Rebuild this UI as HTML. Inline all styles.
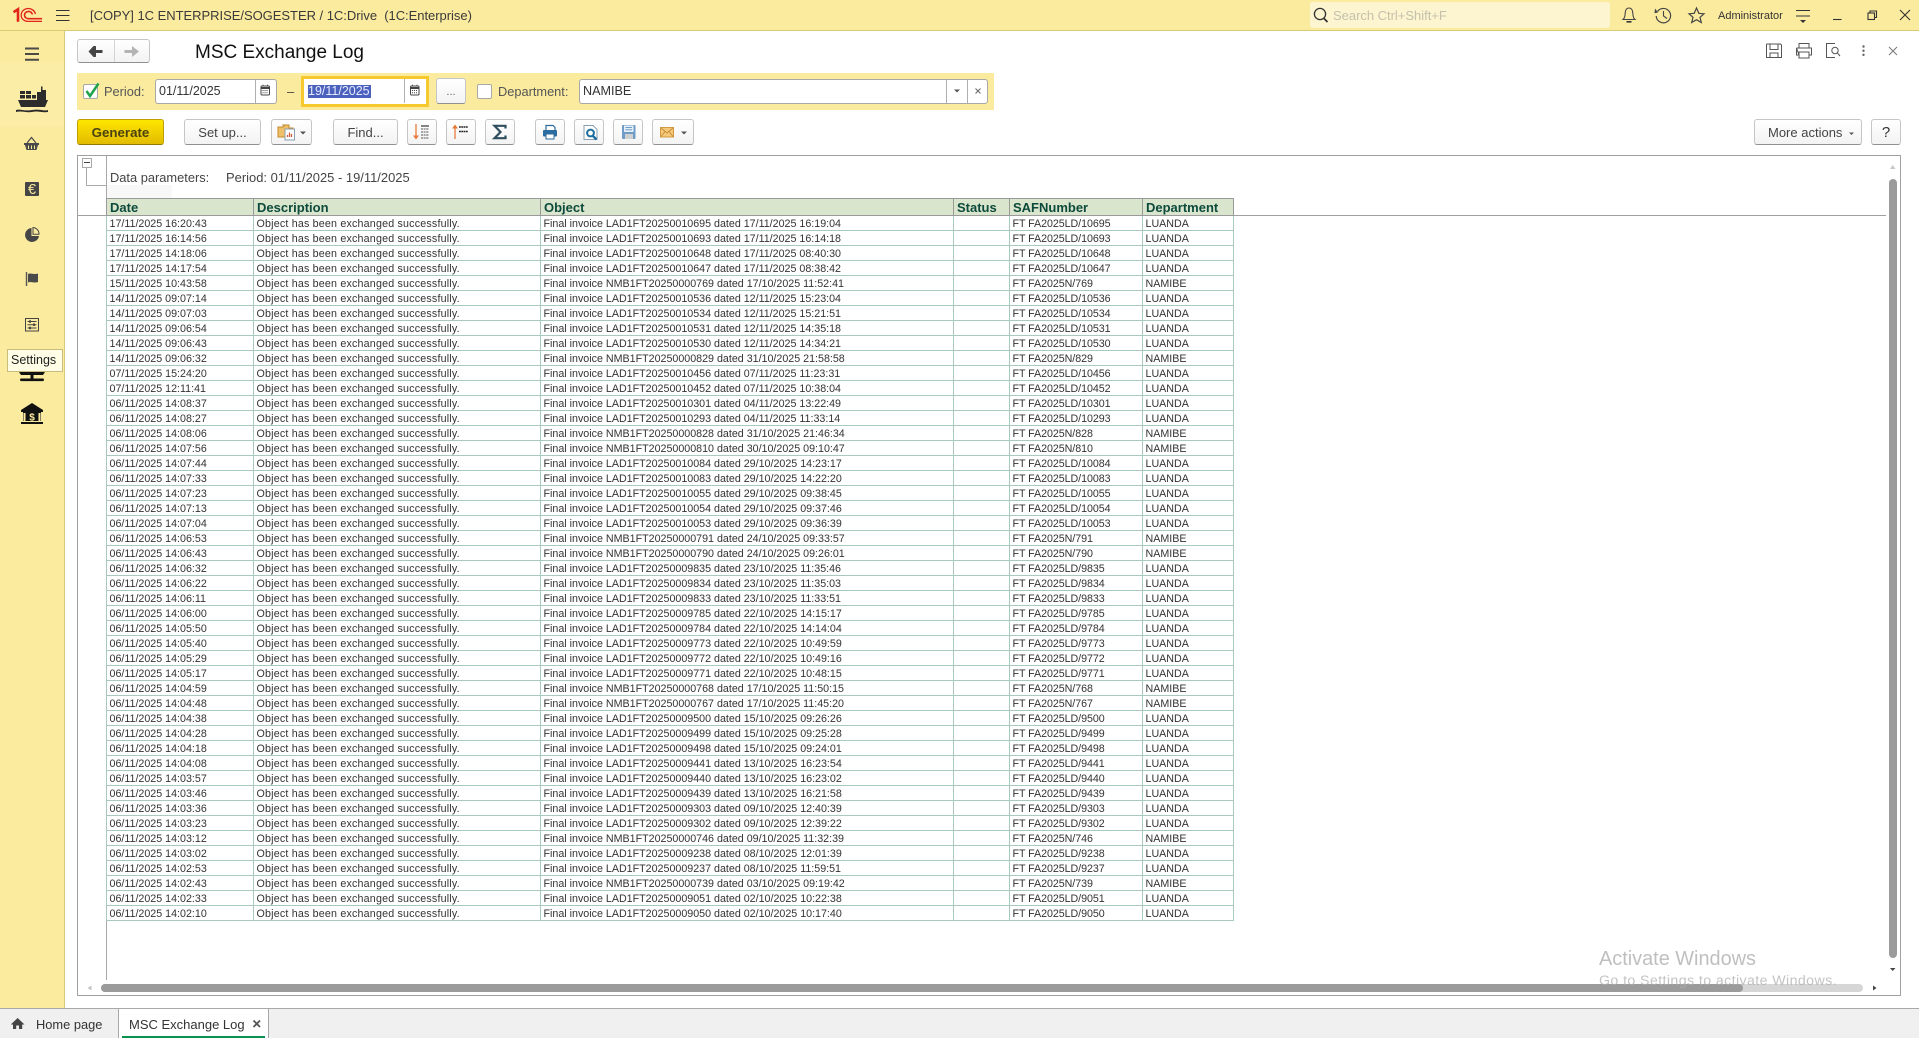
<!DOCTYPE html>
<html><head><meta charset="utf-8"><title>MSC Exchange Log</title>
<style>
*{box-sizing:border-box}
html,body{margin:0;padding:0;width:1919px;height:1038px;overflow:hidden;background:#fff;font-family:"Liberation Sans",Arial,sans-serif;color:#333}
.a{position:absolute}
.t{position:absolute;white-space:nowrap}
.b{position:absolute;top:119px;height:26px;background:linear-gradient(#fff,#f3f3f3);border:1px solid #c6c6c6;border-bottom:1.5px solid #909090;border-radius:3px;font-size:13px;line-height:25px;text-align:center;color:#444}
.i{position:absolute;top:79px;height:25px;background:#fff;border:1px solid #a8a8a8;border-radius:3px}
table{position:absolute;left:106px;top:198px;border-collapse:separate;border-spacing:0;table-layout:fixed;width:1128px;font-size:10.7px;color:#333}
th{height:18px;background:#d9e5cd;border-top:1px solid #9a9a9a;border-bottom:1px solid #9a9a9a;border-right:1px solid #9a9a9a;font-size:13px;line-height:15px;font-weight:bold;color:#0c4a3c;text-align:left;padding:1px 0 0 3px;white-space:nowrap;overflow:hidden}
th:first-child{border-left:1px solid #9a9a9a}
td{height:15px;line-height:12px;padding:2px 0 0 2.5px;border-right:1px solid #a9c8be;border-bottom:1px solid #a9c8be;white-space:nowrap;overflow:hidden}
td:first-child{border-left:1px solid #a9c8be}
td:nth-child(2){letter-spacing:.19px}
td:nth-child(5){letter-spacing:-.06px}
</style></head><body>

<div class="a" style="left:0;top:0;width:1919px;height:31px;background:#fbeb9f;border-bottom:1px solid #d8ca70"></div>
<div class="a" style="left:0;top:31px;width:65px;height:977px;background:#fbeb9f;border-right:1px solid #d8ca78"></div>
<div class="a" style="left:0;top:63px;width:64px;height:64px;background:#fbeca6"></div>

<div class="t" style="left:90px;top:8px;font-size:13px;line-height:16px;color:#3a3a3a;white-space:pre;letter-spacing:-.03px">[COPY] 1C ENTERPRISE/SOGESTER / 1C:Drive  (1C:Enterprise)</div>
<div class="a" style="left:1310px;top:2px;width:300px;height:26px;background:#fdf5d0;border-radius:3px"></div>
<div class="t" style="left:1333px;top:7.5px;font-size:13px;line-height:16px;color:#c4c0ac;letter-spacing:-.02px">Search Ctrl+Shift+F</div>
<div class="t" style="left:1718px;top:9px;font-size:11px;line-height:14px;color:#333">Administrator</div>

<div class="a" style="left:77px;top:39px;width:73px;height:24px;background:linear-gradient(#fff,#f3f3f3);border:1px solid #c6c6c6;border-bottom:1.5px solid #909090;border-radius:3px"></div>
<div class="a" style="left:114px;top:40px;width:1px;height:22px;background:#d4d4d4"></div>
<div class="t" style="left:195px;top:41px;font-size:19px;line-height:23px;color:#111">MSC Exchange Log</div>

<div class="a" style="left:77px;top:73px;width:917px;height:37px;background:#fbeb9f"></div>
<div class="a" style="left:83px;top:84px;width:15px;height:15px;background:#fff;border:1px solid #a8a8a8;border-radius:2px"></div>
<div class="t" style="left:104px;top:84px;font-size:12.8px;line-height:15px;color:#555">Period:</div>
<div class="i" style="left:155px;width:122px"></div>
<div class="a" style="left:255px;top:80px;width:1px;height:23px;background:#b0b0b0"></div>
<div class="t" style="left:159px;top:84px;font-size:12.5px;line-height:15px;color:#333">01/11/2025</div>
<div class="t" style="left:287px;top:84px;font-size:13px;line-height:15px;color:#444">–</div>
<div class="a" style="left:301px;top:76px;width:128px;height:31px;background:#fff;border:3px solid #f6c92e"></div>
<div class="a" style="left:404px;top:79px;width:1px;height:24px;background:#b0b0b0"></div>
<div class="a" style="left:308px;top:85px;width:63px;height:13px;background:#4a62bd"></div>
<div class="t" style="left:308px;top:84px;font-size:12.5px;line-height:15px;color:#e8ebff">19/11/2025</div>
<div class="b" style="left:436px;top:78px;width:30px;font-size:11px;line-height:26px;color:#666">...</div>
<div class="a" style="left:477px;top:84px;width:15px;height:15px;background:#fff;border:1px solid #a8a8a8;border-radius:2px"></div>
<div class="t" style="left:498px;top:84px;font-size:12.8px;line-height:15px;color:#555">Department:</div>
<div class="i" style="left:579px;width:409px"></div>
<div class="a" style="left:946px;top:80px;width:1px;height:23px;background:#b0b0b0"></div>
<div class="a" style="left:967px;top:80px;width:1px;height:23px;background:#b0b0b0"></div>
<div class="t" style="left:583px;top:84px;font-size:12.6px;line-height:15px;color:#333">NAMIBE</div>

<div class="b" style="left:77px;width:87px;background:linear-gradient(#ffe600,#e2bb00);border:1px solid #bfa000;border-bottom:1.5px solid #8e7800;font-weight:bold;font-size:13.3px;color:#4a4210">Generate</div>
<div class="b" style="left:184px;width:77px">Set up...</div>
<div class="b" style="left:271px;width:41px"></div>
<div class="b" style="left:333px;width:65px">Find...</div>
<div class="b" style="left:407px;width:30px"></div>
<div class="b" style="left:446px;width:30px"></div>
<div class="b" style="left:485px;width:30px"></div>
<div class="b" style="left:535px;width:30px"></div>
<div class="b" style="left:574px;width:30px"></div>
<div class="b" style="left:613px;width:30px"></div>
<div class="b" style="left:652px;width:42px"></div>
<div class="b" style="left:1754px;width:108px;text-align:left;padding-left:13px">More actions</div>
<div class="b" style="left:1871px;width:30px;font-size:15px;color:#333">?</div>

<div class="a" style="left:77px;top:155px;width:1824px;height:841px;border:1px solid #a0a0a0;background:#fff"></div>
<div class="a" style="left:106px;top:185px;width:66px;height:13px;background:#f8f8f8"></div>
<div class="a" style="left:106px;top:156px;width:1px;height:824px;background:#a8a8a8"></div>
<div class="a" style="left:86px;top:167px;width:1px;height:18px;background:#a8a8a8"></div>
<div class="a" style="left:86px;top:185px;width:20px;height:1px;background:#a8a8a8"></div>
<div class="a" style="left:82px;top:158px;width:10px;height:10px;background:#fff;border:1px solid #a8a8a8"></div>
<div class="a" style="left:84px;top:162px;width:6px;height:1px;background:#444"></div>
<div class="a" style="left:78px;top:215px;width:1808px;height:1px;background:#a0a0a0"></div>
<div class="t" style="left:110px;top:170px;font-size:12.85px;line-height:16px;color:#444">Data parameters:</div>
<div class="t" style="left:226px;top:170px;font-size:12.95px;line-height:16px;color:#444">Period: 01/11/2025 - 19/11/2025</div>

<table>
<colgroup><col style="width:148px"><col style="width:287px"><col style="width:413px"><col style="width:56px"><col style="width:133px"><col style="width:91px"></colgroup>
<tr><th>Date</th><th>Description</th><th>Object</th><th>Status</th><th>SAFNumber</th><th>Department</th></tr>
<tr><td>17/11/2025 16:20:43</td><td>Object has been exchanged successfully.</td><td>Final invoice LAD1FT20250010695 dated 17/11/2025 16:19:04</td><td></td><td>FT FA2025LD/10695</td><td>LUANDA</td></tr>
<tr><td>17/11/2025 16:14:56</td><td>Object has been exchanged successfully.</td><td>Final invoice LAD1FT20250010693 dated 17/11/2025 16:14:18</td><td></td><td>FT FA2025LD/10693</td><td>LUANDA</td></tr>
<tr><td>17/11/2025 14:18:06</td><td>Object has been exchanged successfully.</td><td>Final invoice LAD1FT20250010648 dated 17/11/2025 08:40:30</td><td></td><td>FT FA2025LD/10648</td><td>LUANDA</td></tr>
<tr><td>17/11/2025 14:17:54</td><td>Object has been exchanged successfully.</td><td>Final invoice LAD1FT20250010647 dated 17/11/2025 08:38:42</td><td></td><td>FT FA2025LD/10647</td><td>LUANDA</td></tr>
<tr><td>15/11/2025 10:43:58</td><td>Object has been exchanged successfully.</td><td>Final invoice NMB1FT20250000769 dated 17/10/2025 11:52:41</td><td></td><td>FT FA2025N/769</td><td>NAMIBE</td></tr>
<tr><td>14/11/2025 09:07:14</td><td>Object has been exchanged successfully.</td><td>Final invoice LAD1FT20250010536 dated 12/11/2025 15:23:04</td><td></td><td>FT FA2025LD/10536</td><td>LUANDA</td></tr>
<tr><td>14/11/2025 09:07:03</td><td>Object has been exchanged successfully.</td><td>Final invoice LAD1FT20250010534 dated 12/11/2025 15:21:51</td><td></td><td>FT FA2025LD/10534</td><td>LUANDA</td></tr>
<tr><td>14/11/2025 09:06:54</td><td>Object has been exchanged successfully.</td><td>Final invoice LAD1FT20250010531 dated 12/11/2025 14:35:18</td><td></td><td>FT FA2025LD/10531</td><td>LUANDA</td></tr>
<tr><td>14/11/2025 09:06:43</td><td>Object has been exchanged successfully.</td><td>Final invoice LAD1FT20250010530 dated 12/11/2025 14:34:21</td><td></td><td>FT FA2025LD/10530</td><td>LUANDA</td></tr>
<tr><td>14/11/2025 09:06:32</td><td>Object has been exchanged successfully.</td><td>Final invoice NMB1FT20250000829 dated 31/10/2025 21:58:58</td><td></td><td>FT FA2025N/829</td><td>NAMIBE</td></tr>
<tr><td>07/11/2025 15:24:20</td><td>Object has been exchanged successfully.</td><td>Final invoice LAD1FT20250010456 dated 07/11/2025 11:23:31</td><td></td><td>FT FA2025LD/10456</td><td>LUANDA</td></tr>
<tr><td>07/11/2025 12:11:41</td><td>Object has been exchanged successfully.</td><td>Final invoice LAD1FT20250010452 dated 07/11/2025 10:38:04</td><td></td><td>FT FA2025LD/10452</td><td>LUANDA</td></tr>
<tr><td>06/11/2025 14:08:37</td><td>Object has been exchanged successfully.</td><td>Final invoice LAD1FT20250010301 dated 04/11/2025 13:22:49</td><td></td><td>FT FA2025LD/10301</td><td>LUANDA</td></tr>
<tr><td>06/11/2025 14:08:27</td><td>Object has been exchanged successfully.</td><td>Final invoice LAD1FT20250010293 dated 04/11/2025 11:33:14</td><td></td><td>FT FA2025LD/10293</td><td>LUANDA</td></tr>
<tr><td>06/11/2025 14:08:06</td><td>Object has been exchanged successfully.</td><td>Final invoice NMB1FT20250000828 dated 31/10/2025 21:46:34</td><td></td><td>FT FA2025N/828</td><td>NAMIBE</td></tr>
<tr><td>06/11/2025 14:07:56</td><td>Object has been exchanged successfully.</td><td>Final invoice NMB1FT20250000810 dated 30/10/2025 09:10:47</td><td></td><td>FT FA2025N/810</td><td>NAMIBE</td></tr>
<tr><td>06/11/2025 14:07:44</td><td>Object has been exchanged successfully.</td><td>Final invoice LAD1FT20250010084 dated 29/10/2025 14:23:17</td><td></td><td>FT FA2025LD/10084</td><td>LUANDA</td></tr>
<tr><td>06/11/2025 14:07:33</td><td>Object has been exchanged successfully.</td><td>Final invoice LAD1FT20250010083 dated 29/10/2025 14:22:20</td><td></td><td>FT FA2025LD/10083</td><td>LUANDA</td></tr>
<tr><td>06/11/2025 14:07:23</td><td>Object has been exchanged successfully.</td><td>Final invoice LAD1FT20250010055 dated 29/10/2025 09:38:45</td><td></td><td>FT FA2025LD/10055</td><td>LUANDA</td></tr>
<tr><td>06/11/2025 14:07:13</td><td>Object has been exchanged successfully.</td><td>Final invoice LAD1FT20250010054 dated 29/10/2025 09:37:46</td><td></td><td>FT FA2025LD/10054</td><td>LUANDA</td></tr>
<tr><td>06/11/2025 14:07:04</td><td>Object has been exchanged successfully.</td><td>Final invoice LAD1FT20250010053 dated 29/10/2025 09:36:39</td><td></td><td>FT FA2025LD/10053</td><td>LUANDA</td></tr>
<tr><td>06/11/2025 14:06:53</td><td>Object has been exchanged successfully.</td><td>Final invoice NMB1FT20250000791 dated 24/10/2025 09:33:57</td><td></td><td>FT FA2025N/791</td><td>NAMIBE</td></tr>
<tr><td>06/11/2025 14:06:43</td><td>Object has been exchanged successfully.</td><td>Final invoice NMB1FT20250000790 dated 24/10/2025 09:26:01</td><td></td><td>FT FA2025N/790</td><td>NAMIBE</td></tr>
<tr><td>06/11/2025 14:06:32</td><td>Object has been exchanged successfully.</td><td>Final invoice LAD1FT20250009835 dated 23/10/2025 11:35:46</td><td></td><td>FT FA2025LD/9835</td><td>LUANDA</td></tr>
<tr><td>06/11/2025 14:06:22</td><td>Object has been exchanged successfully.</td><td>Final invoice LAD1FT20250009834 dated 23/10/2025 11:35:03</td><td></td><td>FT FA2025LD/9834</td><td>LUANDA</td></tr>
<tr><td>06/11/2025 14:06:11</td><td>Object has been exchanged successfully.</td><td>Final invoice LAD1FT20250009833 dated 23/10/2025 11:33:51</td><td></td><td>FT FA2025LD/9833</td><td>LUANDA</td></tr>
<tr><td>06/11/2025 14:06:00</td><td>Object has been exchanged successfully.</td><td>Final invoice LAD1FT20250009785 dated 22/10/2025 14:15:17</td><td></td><td>FT FA2025LD/9785</td><td>LUANDA</td></tr>
<tr><td>06/11/2025 14:05:50</td><td>Object has been exchanged successfully.</td><td>Final invoice LAD1FT20250009784 dated 22/10/2025 14:14:04</td><td></td><td>FT FA2025LD/9784</td><td>LUANDA</td></tr>
<tr><td>06/11/2025 14:05:40</td><td>Object has been exchanged successfully.</td><td>Final invoice LAD1FT20250009773 dated 22/10/2025 10:49:59</td><td></td><td>FT FA2025LD/9773</td><td>LUANDA</td></tr>
<tr><td>06/11/2025 14:05:29</td><td>Object has been exchanged successfully.</td><td>Final invoice LAD1FT20250009772 dated 22/10/2025 10:49:16</td><td></td><td>FT FA2025LD/9772</td><td>LUANDA</td></tr>
<tr><td>06/11/2025 14:05:17</td><td>Object has been exchanged successfully.</td><td>Final invoice LAD1FT20250009771 dated 22/10/2025 10:48:15</td><td></td><td>FT FA2025LD/9771</td><td>LUANDA</td></tr>
<tr><td>06/11/2025 14:04:59</td><td>Object has been exchanged successfully.</td><td>Final invoice NMB1FT20250000768 dated 17/10/2025 11:50:15</td><td></td><td>FT FA2025N/768</td><td>NAMIBE</td></tr>
<tr><td>06/11/2025 14:04:48</td><td>Object has been exchanged successfully.</td><td>Final invoice NMB1FT20250000767 dated 17/10/2025 11:45:20</td><td></td><td>FT FA2025N/767</td><td>NAMIBE</td></tr>
<tr><td>06/11/2025 14:04:38</td><td>Object has been exchanged successfully.</td><td>Final invoice LAD1FT20250009500 dated 15/10/2025 09:26:26</td><td></td><td>FT FA2025LD/9500</td><td>LUANDA</td></tr>
<tr><td>06/11/2025 14:04:28</td><td>Object has been exchanged successfully.</td><td>Final invoice LAD1FT20250009499 dated 15/10/2025 09:25:28</td><td></td><td>FT FA2025LD/9499</td><td>LUANDA</td></tr>
<tr><td>06/11/2025 14:04:18</td><td>Object has been exchanged successfully.</td><td>Final invoice LAD1FT20250009498 dated 15/10/2025 09:24:01</td><td></td><td>FT FA2025LD/9498</td><td>LUANDA</td></tr>
<tr><td>06/11/2025 14:04:08</td><td>Object has been exchanged successfully.</td><td>Final invoice LAD1FT20250009441 dated 13/10/2025 16:23:54</td><td></td><td>FT FA2025LD/9441</td><td>LUANDA</td></tr>
<tr><td>06/11/2025 14:03:57</td><td>Object has been exchanged successfully.</td><td>Final invoice LAD1FT20250009440 dated 13/10/2025 16:23:02</td><td></td><td>FT FA2025LD/9440</td><td>LUANDA</td></tr>
<tr><td>06/11/2025 14:03:46</td><td>Object has been exchanged successfully.</td><td>Final invoice LAD1FT20250009439 dated 13/10/2025 16:21:58</td><td></td><td>FT FA2025LD/9439</td><td>LUANDA</td></tr>
<tr><td>06/11/2025 14:03:36</td><td>Object has been exchanged successfully.</td><td>Final invoice LAD1FT20250009303 dated 09/10/2025 12:40:39</td><td></td><td>FT FA2025LD/9303</td><td>LUANDA</td></tr>
<tr><td>06/11/2025 14:03:23</td><td>Object has been exchanged successfully.</td><td>Final invoice LAD1FT20250009302 dated 09/10/2025 12:39:22</td><td></td><td>FT FA2025LD/9302</td><td>LUANDA</td></tr>
<tr><td>06/11/2025 14:03:12</td><td>Object has been exchanged successfully.</td><td>Final invoice NMB1FT20250000746 dated 09/10/2025 11:32:39</td><td></td><td>FT FA2025N/746</td><td>NAMIBE</td></tr>
<tr><td>06/11/2025 14:03:02</td><td>Object has been exchanged successfully.</td><td>Final invoice LAD1FT20250009238 dated 08/10/2025 12:01:39</td><td></td><td>FT FA2025LD/9238</td><td>LUANDA</td></tr>
<tr><td>06/11/2025 14:02:53</td><td>Object has been exchanged successfully.</td><td>Final invoice LAD1FT20250009237 dated 08/10/2025 11:59:51</td><td></td><td>FT FA2025LD/9237</td><td>LUANDA</td></tr>
<tr><td>06/11/2025 14:02:43</td><td>Object has been exchanged successfully.</td><td>Final invoice NMB1FT20250000739 dated 03/10/2025 09:19:42</td><td></td><td>FT FA2025N/739</td><td>NAMIBE</td></tr>
<tr><td>06/11/2025 14:02:33</td><td>Object has been exchanged successfully.</td><td>Final invoice LAD1FT20250009051 dated 02/10/2025 10:22:38</td><td></td><td>FT FA2025LD/9051</td><td>LUANDA</td></tr>
<tr><td>06/11/2025 14:02:10</td><td>Object has been exchanged successfully.</td><td>Final invoice LAD1FT20250009050 dated 02/10/2025 10:17:40</td><td></td><td>FT FA2025LD/9050</td><td>LUANDA</td></tr>
</table>

<div class="a" style="left:1889px;top:179px;width:8px;height:779px;background:#9b9b9b;border-radius:4px"></div>
<div class="a" style="left:101px;top:984px;width:1762px;height:8px;background:#d6d6d6;border-radius:4px"></div>
<div class="a" style="left:101px;top:984px;width:1642px;height:8px;background:#9b9b9b;border-radius:4px"></div>

<div class="a" style="left:0;top:1008px;width:1919px;height:30px;background:#f0f0f0;border-top:1px solid #a8a8a8"></div>
<div class="a" style="left:118px;top:1008px;width:151px;height:30px;background:#fff;border:1px solid #a8a8a8;border-bottom:0"></div>
<div class="a" style="left:122px;top:1036px;width:143px;height:2px;background:#0a9150"></div>
<div class="t" style="left:36px;top:1017px;font-size:12.85px;line-height:16px;color:#333">Home page</div>
<div class="t" style="left:129px;top:1017px;font-size:13px;line-height:16px;color:#333">MSC Exchange Log</div>

<svg class="a" style="left:0;top:0" width="1919" height="1038" viewBox="0 0 1919 1038" fill="none">
<!-- 1C logo -->
<g stroke="#e1251b" fill="none">
<path d="M13.5 12.2L18 9.3V21.8" stroke-width="2.6"/>
<path d="M35.5 14C34.5 10.5 31.5 8.5 28.5 8.5C24.3 8.5 21.2 11.3 21.2 15.2C21.2 19 24.3 21.4 28.5 21.4H42" stroke-width="1.3"/>
<path d="M32.5 14.5C31.8 12.5 30.3 11.4 28.6 11.4C26.3 11.4 24.5 13 24.5 15.1C24.5 17.2 26.3 18.7 28.6 18.7H42" stroke-width="1.6"/>
</g>
<!-- top hamburger -->
<path d="M56 10.5H69.5M56 15.5H69.5M56 20.5H69.5" stroke="#333" stroke-width="1"/>
<!-- search -->
<circle cx="1320" cy="14" r="5.6" stroke="#333" stroke-width="1.3"/><path d="M1324 18.5L1327.5 22" stroke="#333" stroke-width="1.8"/>
<!-- bell -->
<path d="M1623 19.5C1625.5 17.5 1625 14 1625.3 12C1625.8 9 1627.5 8 1629 8C1630.5 8 1632.2 9 1632.7 12C1633 14 1632.5 17.5 1635 19.5Z" stroke="#444" stroke-width="1.1"/><path d="M1626.5 21.8H1631.5" stroke="#333" stroke-width="1.6"/>
<!-- history -->
<path d="M1657.5 11.5A7.2 7.2 0 1 1 1656.2 16" stroke="#444" stroke-width="1.2"/><path d="M1655 8.5L1658 12.5L1654.5 13.2Z" fill="#444"/><path d="M1663.5 11V16L1667 18.5" stroke="#444" stroke-width="1.1"/>
<!-- star -->
<path d="M1696.5 8L1698.8 13.3L1704 13.8L1700 17.3L1701.3 22.5L1696.5 19.7L1691.7 22.5L1693 17.3L1689 13.8L1694.2 13.3Z" stroke="#444" stroke-width="1.2"/>
<!-- lines menu -->
<path d="M1796 10.5H1810M1796 16H1810" stroke="#333" stroke-width="1"/><path d="M1800 20H1806L1803 23Z" fill="#333"/>
<!-- window controls -->
<path d="M1833 19.5H1841.5" stroke="#333" stroke-width="1.1"/>
<rect x="1868" y="13" width="6.5" height="6.5" stroke="#333" stroke-width="1.1"/><path d="M1870 13V11H1876.5V17.5H1874.5" stroke="#333" stroke-width="1.1"/>
<path d="M1900 10L1910 20M1910 10L1900 20" stroke="#333" stroke-width="1.1"/>
<!-- sidebar hamburger -->
<path d="M25 48.5H39M25 54H39M25 59.8H39" stroke="#4a4a4a" stroke-width="2"/>
<!-- ship -->
<g fill="#2c2c2c">
<rect x="20" y="91" width="5" height="3"/><rect x="26" y="91" width="5" height="3"/>
<rect x="20" y="95" width="5" height="3.5"/><rect x="26" y="95" width="5" height="3.5"/><rect x="32" y="95" width="4" height="3.5"/>
<path d="M37 92H41V86.5H42.5V90H46V100H37Z"/>
<path d="M18 100H48L45 107H21Z"/>
<path d="M16 110C20 108.5 24 111.5 32 110C40 108.5 44 111.5 48 110V112C42 113 38 110.5 32 112C26 113 22 110.5 16 112Z"/>
</g>
<!-- basket -->
<g fill="#4a4a4a"><path d="M24 143H39V145H38L36.5 150H26.5L25 145H24Z"/></g>
<path d="M27 143L31.5 137.5L36 143" stroke="#4a4a4a" stroke-width="1.2"/>
<path d="M28.5 145.5V149M31.5 145.5V149M34.5 145.5V149" stroke="#fbeb9f" stroke-width="1"/>
<!-- euro -->
<rect x="25" y="182" width="14" height="14" rx="1" fill="#454545"/>
<text x="32" y="194" text-anchor="middle" font-family="Liberation Sans,sans-serif" font-size="14.5" fill="#fbeb9f">€</text>
<!-- chart -->
<path d="M31.5 228A7 7 0 1 0 39 236H31.5Z" fill="#454545"/>
<path d="M33 227.5A6.5 6.5 0 0 1 39 234.2H33Z" fill="#fbeb9f" stroke="#454545" stroke-width="1"/>
<!-- flag -->
<path d="M26.5 272V286" stroke="#555" stroke-width="1.4"/><path d="M28 274C31 272.5 33 275 38 273.5V282C33 283.5 31 281 28 282.5Z" fill="#4a4a4a"/>
<!-- settings -->
<rect x="25.5" y="318.5" width="13" height="12.5" stroke="#444" stroke-width="1"/>
<path d="M27.5 321.5H36.5M27.5 324.7H36.5M27.5 328H36.5" stroke="#444" stroke-width="1"/>
<rect x="29" y="320.3" width="2" height="2.4" fill="#444"/><rect x="33" y="323.5" width="2" height="2.4" fill="#444"/><rect x="29" y="326.8" width="2" height="2.4" fill="#444"/>
<!-- computer -->
<path d="M19 372H45L43 375H21Z" fill="#111"/><rect x="30.5" y="375" width="3" height="3.5" fill="#111"/><rect x="20" y="378.5" width="24" height="2.6" rx="1.2" fill="#111"/>
<!-- bank -->
<g fill="#111"><path d="M32 403L43 410V412H21V410Z"/><rect x="23" y="412" width="18" height="9"/><rect x="21" y="422" width="22" height="2"/></g>
<path d="M23.5 413H25.5V421H23.5ZM38.5 413H40.5V421H38.5Z" fill="#fbeb9f"/>
<text x="32" y="420.5" text-anchor="middle" font-family="Liberation Sans,sans-serif" font-size="10" font-weight="bold" fill="#fbeb9f">$</text>
<!-- nav arrows -->
<path d="M92 51.5H102.5" stroke="#444" stroke-width="3"/><path d="M96 46L90 51.5L96 57H93.5L88.5 51.5L93.5 46Z" fill="#444"/><path d="M96 46L89.5 51.5L96 57Z" fill="#444"/>
<path d="M124.5 51.5H136" stroke="#b4b4b4" stroke-width="3"/><path d="M132 46L139 51.5L132 57Z" fill="#b4b4b4"/>
<!-- form icons -->
<g stroke="#555" stroke-width="1">
<path d="M1767 44H1780.5L1781.5 45V57.5H1766.5V44.5Z"/><path d="M1770 44V49.5H1778V44M1770 57.5V53H1778V57.5"/>
<path d="M1799 48V43.5H1809V48M1796.5 48H1811.5V55H1809M1799 55H1796.5V48Z"/><rect x="1799" y="52" width="10" height="6"/>
<path d="M1835 43.5H1826.5V57.5H1835"/><circle cx="1835" cy="50.5" r="3.2"/><path d="M1837.5 53L1840 56"/>
<path d="M1889 47L1897 55M1897 47L1889 55" stroke="#777"/>
</g>
<path d="M1863.5 46.5V46.6M1863.5 50.7V50.8M1863.5 54.8V54.9" stroke="#666" stroke-width="2.4" stroke-linecap="round"/>
<!-- period check -->
<path d="M86.5 91L90 96L98.5 83.5" stroke="#1ea34c" stroke-width="2.5"/>
<!-- calendars -->
<g><rect x="261" y="86" width="8.5" height="9" rx="1" stroke="#444" stroke-width="1"/><path d="M261 88H269.5" stroke="#444" stroke-width="2"/><path d="M263 84.8V86.5M267.5 84.8V86.5" stroke="#444"/><path d="M262.5 90.5H268M262.5 92.8H268" stroke="#444" stroke-dasharray="1 1"/></g>
<g transform="translate(149.5 0)"><rect x="261" y="86" width="8.5" height="9" rx="1" stroke="#444" stroke-width="1"/><path d="M261 88H269.5" stroke="#444" stroke-width="2"/><path d="M263 84.8V86.5M267.5 84.8V86.5" stroke="#444"/><path d="M262.5 90.5H268M262.5 92.8H268" stroke="#444" stroke-dasharray="1 1"/></g>
<!-- dept arrows -->
<path d="M954 89.5H960L957 92.5Z" fill="#555"/>
<path d="M975.5 88.5L980.5 93.5M980.5 88.5L975.5 93.5" stroke="#666" stroke-width="1"/>
<!-- copy icon -->
<path d="M278 127H283L285 125H289V128H293V137H278Z" fill="#f0c068" stroke="#c08a2e" stroke-width="1"/>
<path d="M282 125H288" stroke="#c08a2e"/>
<rect x="285" y="129" width="9.5" height="11" fill="#fff" stroke="#8aa0b0" stroke-width="1"/>
<path d="M287.5 137V135M289.5 137V132.5M291.5 137V134" stroke-width="1.3" stroke="#d05a3a"/>
<path d="M300 131.5H306L303 134.5Z" fill="#555"/>
<!-- sort down -->
<path d="M416 124V138" stroke="#e8793a" stroke-width="1.3"/><path d="M413 135.5H419L416 139.5Z" fill="#e8793a"/>
<path d="M421 126H429" stroke="#333" stroke-width="1.2"/><path d="M421 129H429M421 132H429M421 135H429M421 138H429" stroke="#555" stroke-width="1" stroke-dasharray="2 .6"/>
<!-- sort up -->
<path d="M455 127V139" stroke="#e8793a" stroke-width="1.3"/><path d="M452 128.5H458L455 124.5Z" fill="#e8793a"/>
<path d="M459 127H468M459 131.5H468" stroke="#222" stroke-width="1.5" stroke-dasharray="1.8 .5"/>
<!-- sigma -->
<path d="M505.5 128.5V125.8H494.5L500.5 132L494.5 138.2H505.5V135.5" stroke="#2f4f5f" stroke-width="2.2"/>
<!-- print -->
<path d="M546 131V125.5H553L555 127.5V131" fill="#fff" stroke="#2c6c9f" stroke-width="1.2"/>
<rect x="543" y="130" width="14" height="6.5" rx="1" fill="#2c6c9f"/>
<rect x="546" y="134" width="8" height="5" fill="#fff" stroke="#2c6c9f" stroke-width="1"/>
<!-- preview -->
<path d="M593 125.5H584V139.5H597V129.5Z" fill="#fff" stroke="#8aa0b0" stroke-width="1"/>
<circle cx="590.5" cy="133" r="3.4" stroke="#1c6e9e" stroke-width="2"/><path d="M593 136L596.5 139.5" stroke="#1c6e9e" stroke-width="2.4"/>
<!-- save -->
<rect x="622" y="125" width="13.5" height="14" rx="1" fill="#6f9dc8"/>
<rect x="624" y="125.5" width="9.5" height="6.5" fill="#e6eef6"/>
<path d="M625.5 127.5H632M625.5 129.7H632" stroke="#6f9dc8" stroke-width="1"/>
<rect x="625" y="134" width="8" height="5" fill="#d0d0d0"/>
<!-- mail -->
<rect x="660.5" y="127.5" width="13" height="9.5" fill="#f4c97c" stroke="#d29a3e" stroke-width="1"/>
<path d="M661 128L667 133L673 128M661 136.5L665 131.5M673 136.5L669 131.5" stroke="#c88c34" stroke-width=".9"/>
<path d="M681 131.5H687L684 134.5Z" fill="#555"/>
<!-- more actions / scroll arrows -->
<path d="M1849 132.5H1854L1851.5 135Z" fill="#555"/>
<path d="M1890 169H1895.5L1892.7 165Z" fill="#c8c8c8"/>
<path d="M1890 968H1895.5L1892.7 971Z" fill="#444"/>
<path d="M91.5 985.5V990.5L87.5 988Z" fill="#c4c4c4"/>
<path d="M1873 985.5V990.5L1876.5 988Z" fill="#444"/>
<!-- tab icons -->
<path d="M17.6 1018L10.8 1024.5H13V1029H16.2V1025.5H19V1029H22.2V1024.5H24.5Z" fill="#444"/>
<path d="M253.5 1020.5L260 1027M260 1020.5L253.5 1027" stroke="#555" stroke-width="1.8"/>
</svg>

<div class="a" style="left:7px;top:349px;width:56px;height:23px;background:#fffde6;border:1px solid #c9bd7e"></div>
<div class="t" style="left:11px;top:353px;font-size:12.5px;line-height:15px;color:#222">Settings</div>

<div class="t" style="left:1599px;top:947px;font-size:19.9px;line-height:24px;color:rgba(170,170,170,.75)">Activate Windows</div>
<div class="t" style="left:1599px;top:973px;font-size:14.2px;line-height:16px;letter-spacing:.4px;color:rgba(175,175,175,.75)">Go to Settings to activate Windows.</div>
</body></html>
